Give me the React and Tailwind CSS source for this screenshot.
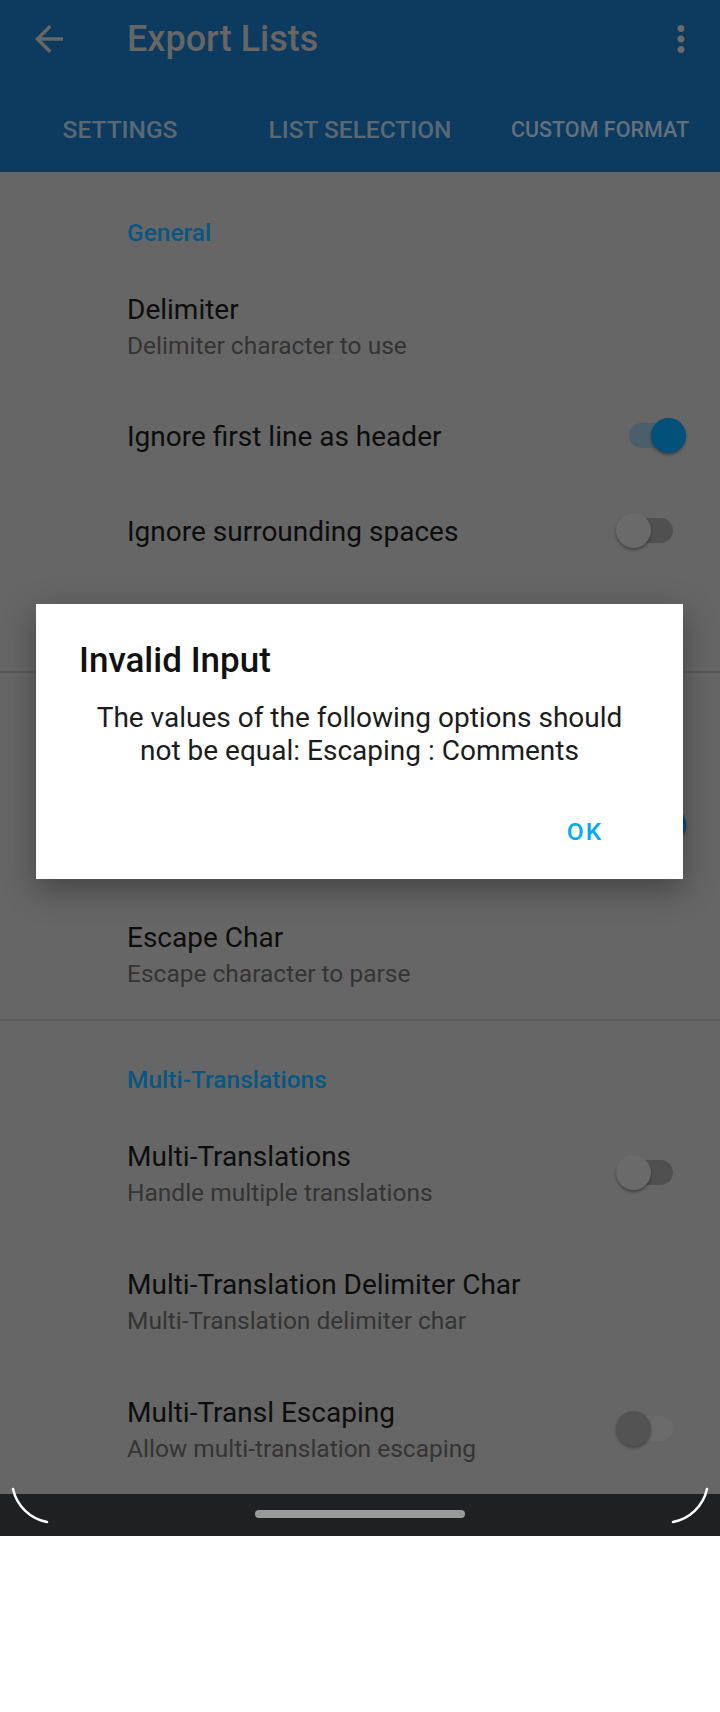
import React from 'react';

// list rows for the export settings screen (dimmed under the dialog scrim)
const Toggle = ({ state }) => {
  if (state === 'on') {
    return (
      <div className="relative w-[70px] h-[35px] shrink-0 -translate-y-[2px]">
        <div className="absolute left-[13px] top-[5px] w-[44px] h-[25px] rounded-full bg-[#4b5e6b]" />
        <div className="absolute left-[35px] top-0 w-[35px] h-[35px] rounded-full bg-[#02517a] shadow-[0_2px_3px_rgba(0,0,0,0.35)]" />
      </div>
    );
  }
  if (state === 'disabled') {
    return (
      <div className="relative w-[70px] h-[35px] shrink-0 -translate-y-[2px]">
        <div className="absolute left-[13px] top-[5px] w-[44px] h-[25px] rounded-full bg-[#6b6b6b]" />
        <div className="absolute left-0 top-0 w-[35px] h-[35px] rounded-full bg-[#535353] shadow-[0_2px_3px_rgba(0,0,0,0.3)]" />
      </div>
    );
  }
  return (
    <div className="relative w-[70px] h-[35px] shrink-0 -translate-y-[2px]">
      <div className="absolute left-[13px] top-[5px] w-[44px] h-[25px] rounded-full bg-[#505050]" />
      <div className="absolute left-0 top-0 w-[35px] h-[35px] rounded-full bg-[#6a6a6a] shadow-[0_2px_3px_rgba(0,0,0,0.35)]" />
    </div>
  );
};

const Category = ({ label, divider }) => (
  <div
    className={
      divider
        ? 'h-[93px] border-t-2 border-[#5c5c5c] pt-[47px] pl-[127px]'
        : 'h-[93px] pt-[49px] pl-[127px]'
    }
  >
    <div className="text-[24.5px] leading-[24px] font-medium text-[#0b5680]">{label}</div>
  </div>
);

const Item = ({ title, summary, toggle, pad = 'pt-[27px] pb-[30px]' }) => (
  <div className={`flex items-center pl-[127px] pr-[34px] ${pad}`}>
    <div className="flex-1 min-w-0">
      {title && <div className="text-[28px] leading-[36px] text-[#0d0d0d]">{title}</div>}
      {summary && <div className="text-[24.5px] leading-[35px] text-[#343434]">{summary}</div>}
    </div>
    {toggle && <Toggle state={toggle} />}
  </div>
);

const App = () => {
  return (
    <div className="relative w-[720px] h-[1712px] bg-white overflow-hidden font-['Roboto',sans-serif]">
      <div className="h-[1494px] flex flex-col bg-[#666666] overflow-hidden">
        {/* App bar */}
        <header className="shrink-0 bg-[#0d3b5f]">
          <div className="h-[88px] pb-[10px] flex items-center">
            <button className="ml-[28px] w-[42px] h-[42px]" aria-label="Back">
              <svg viewBox="0 0 24 24" width="42" height="42" fill="#666666">
                <path d="M20 11H7.83l5.59-5.59L12 4l-8 8 8 8 1.41-1.41L7.83 13H20v-2z" />
              </svg>
            </button>
            <h1 className="ml-[57px] text-[36px] leading-[42px] font-medium text-[#666666]">Export Lists</h1>
            <button className="ml-auto mr-[18px] w-[42px] h-[42px]" aria-label="More">
              <svg viewBox="0 0 24 24" width="42" height="42" fill="#6b6b6b">
                <path d="M12 8c1.1 0 2-.9 2-2s-.9-2-2-2-2 .9-2 2 .9 2 2 2zm0 2c-1.1 0-2 .9-2 2s.9 2 2 2 2-.9 2-2-.9-2-2-2zm0 6c-1.1 0-2 .9-2 2s.9 2 2 2 2-.9 2-2-.9-2-2-2z" />
              </svg>
            </button>
          </div>
          <nav className="h-[84px] grid grid-cols-3 items-center text-center font-medium uppercase">
            <span className="text-[24.5px] text-[#5a6874]">Settings</span>
            <span className="text-[24.5px] text-[#5a6874]">List Selection</span>
            <span className="text-[21.5px] text-[#64707a]">Custom Format</span>
          </nav>
        </header>

        {/* Preferences */}
        <div className="flex-1 overflow-hidden">
          <Category label="General" />
          <Item title="Delimiter" summary="Delimiter character to use" />
          <Item title="Ignore first line as header" toggle="on" pad="pt-[26px] pb-[33px]" />
          <Item title="Ignore surrounding spaces" toggle="off" pad="pt-[26px] pb-[33px]" />
          <div className="h-[88px]" />
          <Category label="" divider />
          <div className="h-[128px] flex items-center justify-end pr-[34px] pt-[27px] pb-[30px]">
            <Toggle state="on" />
          </div>
          <Item title="Escape Char" summary="Escape character to parse" pad="pt-[28px] pb-[28px]" />
          <Category label="Multi-Translations" divider />
          <Item title="Multi-Translations" summary="Handle multiple translations" toggle="off" />
          <Item title="Multi-Translation Delimiter Char" summary="Multi-Translation delimiter char" />
          <Item title="Multi-Transl Escaping" summary="Allow multi-translation escaping" toggle="disabled" />
        </div>
      </div>

      {/* Navigation bar */}
      <div className="h-[42px] bg-[#1e2022] flex justify-center pt-[16px]">
        <div className="w-[210px] h-[8px] rounded-full bg-[#989a99]" />
      </div>

      {/* Screen corner arcs */}
      <svg className="absolute left-0 top-[1480px]" width="60" height="50" fill="none">
        <path d="M13 9 A43 43 0 0 0 47 42" stroke="#ffffff" strokeWidth="2.5" strokeLinecap="round" />
      </svg>
      <svg className="absolute right-0 top-[1480px]" width="60" height="50" fill="none">
        <path d="M47 9 A43 43 0 0 1 13 42" stroke="#ffffff" strokeWidth="2.5" strokeLinecap="round" />
      </svg>

      {/* Alert dialog */}
      <div className="absolute left-[36px] top-[604px] w-[647px] h-[275px] bg-white shadow-[0_10px_30px_rgba(0,0,0,0.35)]">
        <div className="pt-[36px] px-[43px] text-[35px] leading-[41px] font-medium text-[#111111]">Invalid Input</div>
        <p className="mt-[20px] px-[40px] text-center text-[28px] leading-[33px] text-[#1c1c1c]">
          The values of the following options should
          <br />
          not be equal: Escaping : Comments
        </p>
        <div className="mt-[50px] flex justify-end pr-[42px]">
          <button className="w-[112px] text-center text-[24.5px] leading-[29px] font-medium tracking-[2px] text-[#03a9f4]">
            OK
          </button>
        </div>
      </div>
    </div>
  );
};

export default App;
